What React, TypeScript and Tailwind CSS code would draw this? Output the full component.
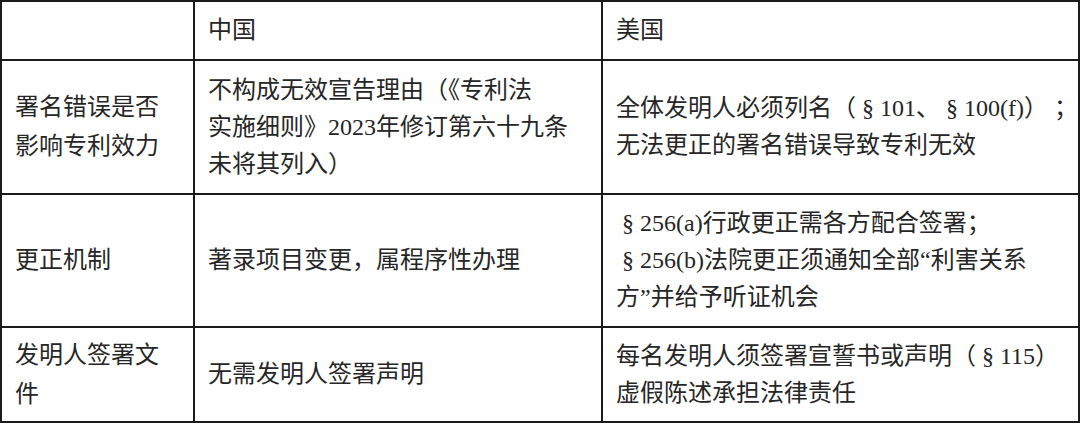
const font = {
  fontFamily: '"Liberation Serif", "Noto Sans CJK SC", serif',
};

const cell =
  "border-2 border-[#1b1b1b] pl-[13px] pr-[4px] align-middle whitespace-nowrap text-[24px] leading-[37px] text-[#262626]";

export default function App() {
  return (
    <div className="h-[423px] w-[1080px] bg-white" style={font}>
      <table className="w-[1080px] table-fixed border-collapse">
        <colgroup>
          <col className="w-[193px]" />
          <col className="w-[408px]" />
          <col />
        </colgroup>
        <tbody>
          <tr className="h-[59px]">
            <td className={cell} />
            <td className={cell}>中国</td>
            <td className={cell}>美国</td>
          </tr>
          <tr className="h-[134px]">
            <td className={`${cell} leading-[39px]`}>
              署名错误是否
              <br />
              影响专利效力
            </td>
            <td className={cell}>
              不构成无效宣告理由（《专利法
              <br />
              实施细则》2023年修订第六十九条
              <br />
              未将其列入）
            </td>
            <td className={cell}>
              全体发明人必须列名（ § 101、 § 100(f)） ；
              <br />
              无法更正的署名错误导致专利无效
            </td>
          </tr>
          <tr className="h-[133px]">
            <td className={cell}>更正机制</td>
            <td className={cell}>著录项目变更，属程序性办理</td>
            <td className={cell}>
              &nbsp;§ 256(a)行政更正需各方配合签署；
              <br />
              &nbsp;§ 256(b)法院更正须通知全部“利害关系
              <br />
              方”并给予听证机会
            </td>
          </tr>
          <tr className="h-[95px]">
            <td className={`${cell} leading-[39px]`}>
              发明人签署文
              <br />件
            </td>
            <td className={cell}>无需发明人签署声明</td>
            <td className={cell}>
              每名发明人须签署宣誓书或声明（ § 115）
              <br />
              虚假陈述承担法律责任
            </td>
          </tr>
        </tbody>
      </table>
    </div>
  );
}
